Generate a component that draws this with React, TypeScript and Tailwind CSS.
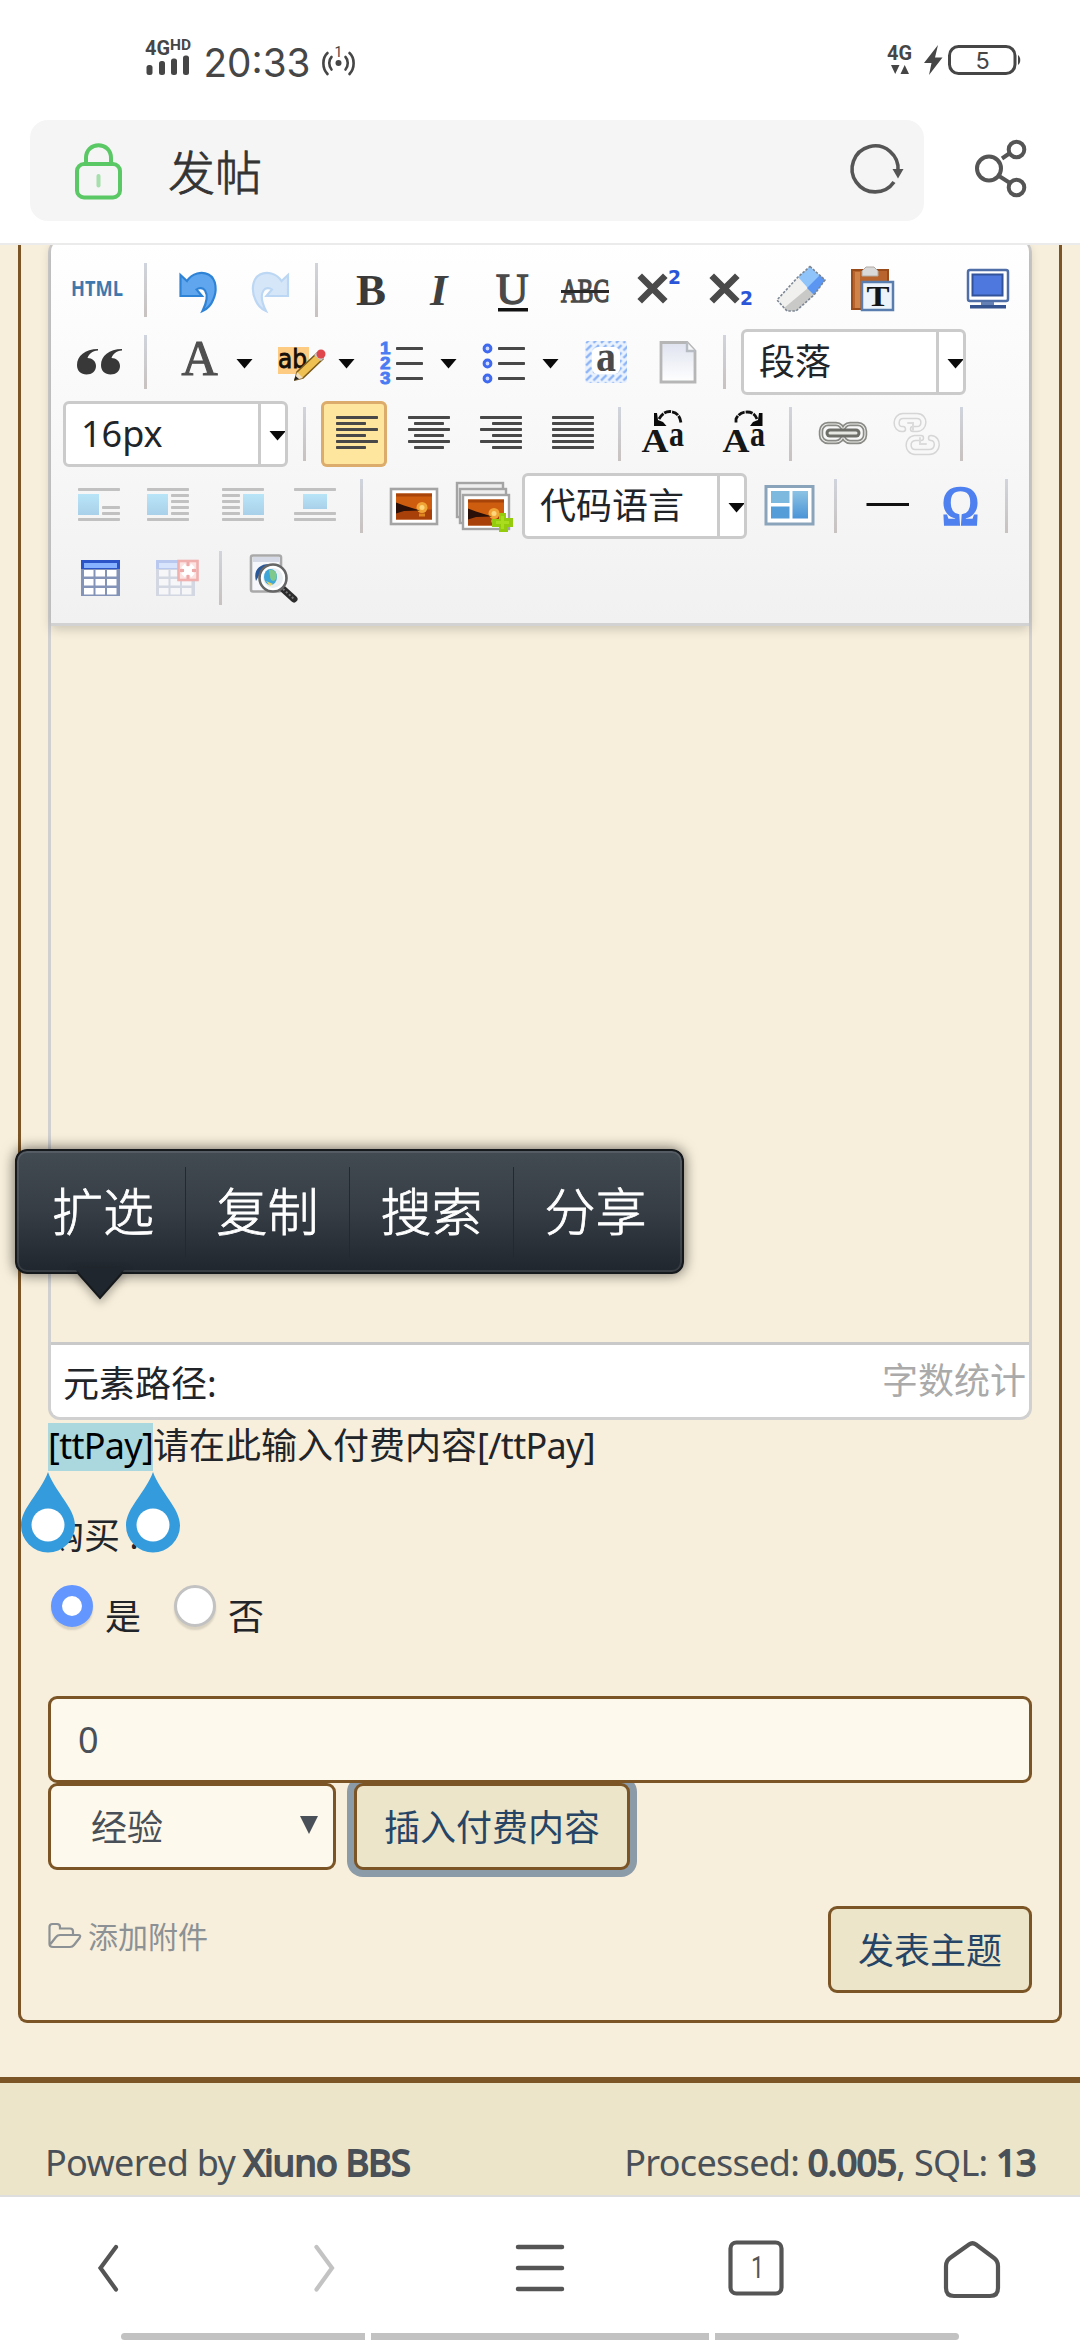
import React, { useState } from "react";

const NAV_COLOR = "#555555";

type IconProps = { children: React.ReactNode; className?: string };

// every toolbar icon is drawn on the same 66x66 board
const Glyph: React.FC<IconProps> = ({ children, className }) => (
  <svg
    width="66"
    height="66"
    viewBox="0 0 66 66"
    className={`shrink-0 overflow-visible ${className ?? ""}`}
  >
    {children}
  </svg>
);

const ToolButton: React.FC<{
  children: React.ReactNode;
  active?: boolean;
  arrow?: boolean;
  className?: string;
}> = ({ children, active, arrow, className }) => (
  <button
    type="button"
    className={`flex shrink-0 h-[66px] mr-[6px] rounded-[6px] ${
      arrow ? "w-[96px]" : "w-[66px]"
    } ${active ? "bg-[#ffe69f] shadow-[inset_0_0_0_3px_#dcac6c]" : ""} ${
      className ?? ""
    }`}
  >
    <Glyph>{children}</Glyph>
    {arrow && (
      <svg width="30" height="66" viewBox="66 0 30 66">
        <path d="M74.500 30 H90.500 L82.500 39.500 Z" fill="#0a0a0a" />
      </svg>
    )}
  </button>
);

const Separator = () => (
  <div className="shrink-0 w-[3px] h-[54px] ml-[9px] mr-[15px] bg-gradient-to-b from-[#d0d4dc] to-[#c8c2c0]" />
);

const Combo: React.FC<{ label: string }> = ({ label }) => (
  <div className="flex shrink-0 w-[225px] h-[66px] mr-[6px] border-[3px] border-[#cbcbcb] rounded-[6px] bg-white text-[36px] text-[#212529]">
    <div className="flex items-center flex-1 pl-[15px] whitespace-nowrap leading-none">
      {label}
    </div>
    <div className="w-[27px] border-l-[3px] border-[#cbcbcb]">
      <svg width="24" height="60" viewBox="0 0 24 60">
        <path d="M8.500 27 H24 V28 L16.500 36.500 Z" fill="#0a0a0a" />
      </svg>
    </div>
  </div>
);

const Row: React.FC<{ children: React.ReactNode }> = ({ children }) => (
  <div className="flex items-center h-[72px]">{children}</div>
);

const Lines: React.FC<{
  rows: [number, number, number][];
  color?: string;
}> = ({ rows, color = "#484848" }) => (
  <>
    {rows.map(([x, x2, y], i) => (
      <rect key={i} x={x} y={y - 1.5} width={x2 - x} height="3" rx="0.8" fill={color} />
    ))}
  </>
);

const UndoPath = ({ light }: { light?: boolean }) => (
  <path
    d="M18.500 18 L25 24 C30 16 40 14 46.500 17.500 C55 22 55 35 51 43 C49 48 45 52 40.500 54 C44.500 46 46 38 43 33.500 C41 30.500 37 30.500 34.500 32.500 L40 39 H18.500 Z"
    fill={light ? "#d5e6f9" : "#5fa6ee"}
    stroke={light ? "#bcd7f3" : "#2f83d6"}
    strokeWidth="2.200"
  />
);

const CrossX = () => (
  <path d="M21 21 L42 42 M42 21 L21 42" stroke="#4a4a4a" strokeWidth="6.500" strokeLinecap="square" />
);

const Two = ({ y }: { y: number }) => (
  <text x="47" y={y} fontFamily="DejaVu Sans" fontWeight="700" fontSize="20" fill="#2b55d8" textLength="13" lengthAdjust="spacingAndGlyphs">
    2
  </text>
);

const Sunset = ({ x, y }: { x: number; y: number }) => (
  <g transform={`translate(${x} ${y})`}>
    <rect width="36" height="26" fill="#cf5d10" />
    <rect width="36" height="3" fill="#a8440a" />
    <path d="M0 16 H36 V26 H0 Z" fill="#a8400a" />
    <circle cx="26" cy="14" r="5.500" fill="#f0a436" />
    <circle cx="26" cy="14" r="2.500" fill="#ffd67a" />
    <path d="M0 9 L8 12 L24 17 L8 17.500 L0 20 Z" fill="#2a1008" />
    <path d="M23 20 H29 V23 H23 Z" fill="#e0861e" />
  </g>
);

const TurnCase = ({ flip }: { flip?: boolean }) => (
  <g transform={flip ? "translate(9 0)" : undefined}>
    {flip ? (
      <>
        <path d="M45.500 12 V25 H33 L36 21 L41 19 L42 12 Z" fill="#0a0a0a" />
        <path d="M19 21.500 V18 C21 14 24 11 30 11 C35 11 38 13 40 18" fill="none" stroke="#111" strokeWidth="2.800" strokeDasharray="7 1" />
      </>
    ) : (
      <>
        <path d="M18 12 V25 H30.500 L27 21 L22 19 L21 12 Z" fill="#0a0a0a" />
        <path d="M23 18 C26 13 29 10.500 34 10.500 C40 11 44 14 45 22" fill="none" stroke="#111" strokeWidth="2.800" strokeDasharray="7 1" />
      </>
    )}
    <text x="5.500" y="51" fontFamily="Liberation Serif" fontWeight="700" fontSize="34" fill="#161616" textLength="27" lengthAdjust="spacingAndGlyphs">
      A
    </text>
    <text x="33" y="45" fontFamily="Liberation Serif" fontWeight="700" fontSize="35" fill="#161616" textLength="15" lengthAdjust="spacingAndGlyphs">
      a
    </text>
  </g>
);

const Toolbar = () => (
  <div className="h-[386px] pt-[14px] pl-[12px] rounded-t-[12px] border-b-[3px] border-[#d2d2d2] bg-gradient-to-b from-white to-[#f1f1f1] shadow-[0_3px_12px_rgba(0,0,0,0.18)]">
    <Row>
      <ToolButton>
        <text x="8" y="39" fontFamily="Open Sans" fontWeight="700" fontSize="21" fill="#3f78ad" textLength="52" lengthAdjust="spacingAndGlyphs">
          HTML
        </text>
      </ToolButton>
      <Separator />
      <ToolButton>
        <UndoPath />
      </ToolButton>
      <ToolButton>
        <g transform="translate(72.500 0) scale(-1 1)">
          <UndoPath light />
        </g>
      </ToolButton>
      <Separator />
      <ToolButton>
        <text x="23" y="48" fontFamily="Liberation Serif" fontWeight="700" fontSize="45" fill="#3a3a3a">
          B
        </text>
      </ToolButton>
      <ToolButton>
        <text x="25" y="48" fontFamily="Liberation Serif" fontWeight="700" fontStyle="italic" fontSize="45" fill="#404040">
          I
        </text>
      </ToolButton>
      <ToolButton>
        <text x="19" y="47" fontFamily="Liberation Serif" fontSize="45" fill="#4a4a4a" stroke="#4a4a4a" strokeWidth="1.500">
          U
        </text>
        <rect x="21" y="51" width="30" height="3.500" fill="#111" />
      </ToolButton>
      <ToolButton>
        <text x="12" y="45" fontFamily="Liberation Serif" fontSize="34" fill="#4a4a4a" stroke="#4a4a4a" strokeWidth="1.400" textLength="48" lengthAdjust="spacingAndGlyphs">
          ABC
        </text>
        <rect x="12" y="33" width="48" height="3" fill="#2a2a2a" />
      </ToolButton>
      <ToolButton>
        <CrossX />
        <Two y={27} />
      </ToolButton>
      <ToolButton>
        <CrossX />
        <Two y={48} />
      </ToolButton>
      <ToolButton>
        <path d="M33 20 L49 38 L31 54 H22 L12 43 Z" fill="#f0f0ee" />
        <path d="M19 51 L43 31 L49 38 L31 54 H22 Z" fill="#c9c9c7" />
        <path d="M45 9.500 L60 23 L49 38 L33 20 Z" fill="#8fc4fb" />
        <path d="M60 23 L49 38 L42 31 L55 18 Z" fill="#5a96f2" />
        <path d="M45 9.500 L60 23 L49 38 L31 54 H22 L12 43 L33 20 Z" fill="none" stroke="#7d8794" strokeWidth="1.600" strokeDasharray="2.500 1.500" />
      </ToolButton>
      <ToolButton>
        <rect x="15" y="13" width="36" height="39" fill="#b8642c" stroke="#9a4b1a" strokeWidth="2" />
        <rect x="18" y="15" width="5" height="36" fill="#cf8348" />
        <path d="M25 14 L29 10 H37 L41 14 V19 H25 Z" fill="#d9d9d9" stroke="#b0aaa5" />
        <rect x="25" y="25" width="31" height="28" fill="#edf3fb" stroke="#5a7db0" strokeWidth="2.500" />
        <text x="29.500" y="49" fontFamily="Liberation Serif" fontWeight="700" fontSize="29" fill="#151515" textLength="23" lengthAdjust="spacingAndGlyphs">
          T
        </text>
      </ToolButton>
      <ToolButton className="ml-[42px]">
        <rect x="17" y="13" width="40" height="31" rx="2" fill="#fff" stroke="#4f6ea8" strokeWidth="2.500" />
        <rect x="21.500" y="17.500" width="30" height="21" fill="#4f78df" stroke="#32539a" strokeWidth="2" />
        <rect x="30" y="45" width="13" height="4" fill="#6480b4" />
        <rect x="19" y="48" width="36" height="3.500" fill="#34538f" />
      </ToolButton>
    </Row>

    <Row>
      <ToolButton>
        {[0, 24].map((dx) => (
          <path
            key={dx}
            transform={`translate(${dx} 0)`}
            d="M35 20 C22 20 14 27 14 36 C14 42 18 45.500 23.500 45.500 C29 45.500 33 42 33 37 C33 32 29 29 24.500 29 C26 25 29 22 35 21.500 Z"
            fill="#383838"
          />
        ))}
      </ToolButton>
      <Separator />
      <ToolButton arrow>
        <text x="19.500" y="46" fontFamily="Liberation Serif" fontSize="50" fill="#505050" stroke="#505050" strokeWidth="1.200">
          A
        </text>
      </ToolButton>
      <ToolButton arrow>
        <rect x="14" y="18" width="31" height="27" fill="#fecb83" />
        <text x="14" y="39" fontFamily="DejaVu Sans" fontSize="27" fill="#15100a" stroke="#15100a" strokeWidth="0.900" textLength="29" lengthAdjust="spacingAndGlyphs">
          ab
        </text>
        <path d="M53 24 L59 30 L39 49 L31 51 L33 43 Z" fill="#efc052" stroke="#7a5a1c" strokeWidth="1.500" />
        <path d="M33 43 L39 49 L31 51 Z" fill="#f0dfc0" />
        <path d="M31.500 47 L35 50 L30 51.500 Z" fill="#222" />
        <path d="M50 26 L53 23 L60 29 L57 32 Z" fill="#c8c8c8" />
        <circle cx="57" cy="25" r="4.500" fill="#e0474c" />
      </ToolButton>
      <ToolButton arrow>
        {[1, 2, 3].map((n, i) => (
          <text key={n} x="14" y={25 + i * 15} fontFamily="Liberation Sans" fontWeight="700" fontSize="17" fill="#4a7bf2" stroke="#4a7bf2" strokeWidth="0.800" textLength="10.500" lengthAdjust="spacingAndGlyphs">
            {n}
          </text>
        ))}
        <Lines rows={[[30, 57, 19.5], [30, 57, 34.5], [30, 57, 49.5]]} />
      </ToolButton>
      <ToolButton arrow>
        {[19.5, 34.5, 49.5].map((y) => (
          <circle key={y} cx="19.500" cy={y} r="3.400" fill="#cfdcff" stroke="#3f69ef" strokeWidth="3" />
        ))}
        <Lines rows={[[30, 57, 19.5], [30, 57, 34.5], [30, 57, 49.5]]} />
      </ToolButton>
      <ToolButton>
        <defs>
          <pattern id="hatch" width="7.500" height="7.500" patternUnits="userSpaceOnUse">
            <rect width="7.500" height="7.500" fill="#eaf2fe" />
            <path d="M1 6.500 L6.500 1" stroke="#8db4f5" strokeWidth="2.400" />
          </pattern>
        </defs>
        <rect x="15" y="12" width="42" height="42" rx="3" fill="url(#hatch)" />
        <rect x="22" y="18" width="28" height="27" rx="6" fill="#fff" />
        <text x="26" y="42" fontFamily="Liberation Serif" fontWeight="700" fontSize="44" fill="#4a4a4a" textLength="20" lengthAdjust="spacingAndGlyphs">
          a
        </text>
      </ToolButton>
      <ToolButton>
        <linearGradient id="sheet" x1="0" y1="0" x2="0" y2="1">
          <stop offset="0" stopColor="#dfe3ef" />
          <stop offset="1" stopColor="#ffffff" />
        </linearGradient>
        <path d="M19 13.500 H45 L53 22 V53 H19 Z" fill="url(#sheet)" stroke="#b6b6b6" strokeWidth="2.800" />
        <path d="M45 13.500 V22 H53" fill="#f4f6f8" stroke="#b6bcc2" strokeWidth="2.400" />
      </ToolButton>
      <Separator />
      <Combo label="段落" />
    </Row>

    <Row>
      <Combo label="16px" />
      <Separator />
      <ToolButton active>
        <Lines rows={[[15, 57, 16.5], [15, 45, 22.5], [15, 57, 28.5], [15, 45, 34.5], [15, 57, 40.5], [15, 45, 46.5]]} />
      </ToolButton>
      <ToolButton>
        <Lines rows={[[15, 57, 16.5], [21, 51, 22.5], [15, 57, 28.5], [21, 51, 34.5], [15, 57, 40.5], [21, 51, 46.5]]} />
      </ToolButton>
      <ToolButton>
        <Lines rows={[[15, 57, 16.5], [27, 57, 22.5], [15, 57, 28.5], [27, 57, 34.5], [15, 57, 40.5], [27, 57, 46.5]]} />
      </ToolButton>
      <ToolButton>
        <Lines rows={[[15, 57, 16.5], [15, 57, 22.5], [15, 57, 28.5], [15, 57, 34.5], [15, 57, 40.5], [15, 57, 46.5]]} />
      </ToolButton>
      <Separator />
      <ToolButton>
        <TurnCase />
      </ToolButton>
      <ToolButton>
        <TurnCase flip />
      </ToolButton>
      <Separator />
      <ToolButton>
        <rect x="14" y="23" width="22" height="18" rx="7" fill="none" stroke="#8a8a86" strokeWidth="4.500" />
        <rect x="36" y="23" width="22" height="18" rx="7" fill="none" stroke="#8a8a86" strokeWidth="4.500" />
        <rect x="14" y="23" width="22" height="18" rx="7" fill="none" stroke="#ececea" strokeWidth="1.200" />
        <rect x="36" y="23" width="22" height="18" rx="7" fill="none" stroke="#ececea" strokeWidth="1.200" />
        <path d="M23 32 H49" stroke="#6f6f6a" strokeWidth="9" strokeLinecap="round" />
        <path d="M23 32 H49" stroke="#e6e6e2" strokeWidth="3" strokeLinecap="round" />
      </ToolButton>
      <ToolButton>
        <g fill="none" strokeLinecap="round">
          <path d="M24 28 C15 29 16 15 24 15 H38 C47 15 46 28 38 28 H34" stroke="#d6d6d6" strokeWidth="6.500" />
          <path d="M42 37 H36 C27 38 28 51 36 51 H50 C60 51 60 37 52 37" stroke="#d6d6d6" strokeWidth="6.500" />
          <path d="M24 28 C15 29 16 15 24 15 H38 C47 15 46 28 38 28 H34" stroke="#f8f8f8" strokeWidth="3.500" />
          <path d="M42 37 H36 C27 38 28 51 36 51 H50 C60 51 60 37 52 37" stroke="#f8f8f8" strokeWidth="3.500" />
          <path d="M29 22 H34 V29 M41 37 V43 H47" stroke="#dcdcdc" strokeWidth="2" />
        </g>
      </ToolButton>
      <Separator />
    </Row>

    <Row>
      <ToolButton>
        <linearGradient id="sky" x1="0" y1="0" x2="0" y2="1">
          <stop offset="0" stopColor="#b9e5f8" />
          <stop offset="1" stopColor="#a9d0e9" />
        </linearGradient>
        <rect x="15" y="21" width="21" height="21" fill="url(#sky)" />
        <Lines color="#c1c1c1" rows={[[15, 57, 16.5], [39, 57, 34.5], [39, 57, 40.5], [15, 57, 46.5]]} />
      </ToolButton>
      <ToolButton>
        <rect x="12" y="21" width="21" height="21" fill="url(#sky)" />
        <Lines color="#c1c1c1" rows={[[12, 54, 16.5], [36, 54, 22.5], [36, 54, 28.5], [36, 54, 34.5], [36, 54, 40.5], [12, 54, 46.5]]} />
      </ToolButton>
      <ToolButton>
        <rect x="36" y="21" width="21" height="21" fill="url(#sky)" />
        <Lines color="#c1c1c1" rows={[[15, 57, 16.5], [15, 33, 22.5], [15, 33, 28.5], [15, 33, 34.5], [15, 33, 40.5], [15, 57, 46.5]]} />
      </ToolButton>
      <ToolButton>
        <rect x="24" y="21" width="24" height="15" fill="url(#sky)" />
        <Lines color="#c1c1c1" rows={[[15, 57, 16.5], [15, 57, 40.5], [15, 57, 46.5]]} />
      </ToolButton>
      <Separator />
      <ToolButton>
        <rect x="13" y="16" width="46" height="35" fill="#fff" stroke="#a4a4a4" strokeWidth="2.600" />
        <Sunset x={18} y={20.5} />
      </ToolButton>
      <ToolButton>
        <rect x="7" y="10" width="46" height="34" fill="#eee" stroke="#a4a4a4" strokeWidth="2.400" />
        <rect x="10" y="16" width="46" height="34" fill="#eee" stroke="#a4a4a4" strokeWidth="2.400" />
        <rect x="13" y="22" width="46" height="34" fill="#fff" stroke="#a4a4a4" strokeWidth="2.400" />
        <Sunset x={18} y={26.5} />
        <path d="M49 40 H56 V45 H63 V54 H58 V59 H49 V54 H42 V46 H49 Z" fill="#94cb0c" />
        <path d="M51 43 H54 V48 H59 V51 H54 V56 H51 V51 H46 V48 H51 Z" fill="#a9dc1c" />
      </ToolButton>
      <Combo label="代码语言" />
      <ToolButton>
        <linearGradient id="tile" x1="0" y1="0" x2="0" y2="1">
          <stop offset="0" stopColor="#8cc3e4" />
          <stop offset="1" stopColor="#4a94d6" />
        </linearGradient>
        <rect x="13" y="13.500" width="47" height="37.500" fill="#fff" stroke="#8aa4bb" strokeWidth="3" />
        <rect x="18" y="18" width="18.500" height="12" fill="#7db9de" />
        <rect x="18" y="33.500" width="18.500" height="12" fill="#559dd8" />
        <rect x="39.500" y="18" width="15.500" height="27.500" fill="url(#tile)" />
      </ToolButton>
      <Separator />
      <ToolButton>
        <rect x="14.500" y="30" width="42.500" height="3" fill="#111" />
      </ToolButton>
      <ToolButton>
        <text x="18" y="51" fontFamily="Liberation Serif" fontSize="54" fill="#4f80f0" stroke="#4f80f0" strokeWidth="2.400" textLength="37" lengthAdjust="spacingAndGlyphs">
          Ω
        </text>
      </ToolButton>
      <Separator />
    </Row>

    <Row>
      <ToolButton>
        <rect x="18" y="15" width="39" height="36" fill="#8494b8" />
        <rect x="18" y="15" width="39" height="9" fill="#2b54c8" />
        <rect x="21" y="18" width="33" height="5" fill="#86b2ff" />
        {[25, 34, 43].map((y) =>
          [21, 32.5, 44].map((x) => (
            <rect key={`${x}-${y}`} x={x} y={y} width="9.500" height="6.500" fill="#fff" />
          ))
        )}
      </ToolButton>
      <ToolButton className="mr-[9px]">
        <g transform="translate(3 0)">
          <rect x="18" y="15" width="39" height="36" fill="#d2d7e2" />
          <rect x="18" y="15" width="39" height="9" fill="#b9c8ef" />
          <rect x="21" y="18" width="33" height="5" fill="#d8e4fb" />
          {[25, 34, 43].map((y) =>
            [21, 32.5, 44].map((x) => (
              <rect key={`${x}-${y}`} x={x} y={y} width="9.500" height="6.500" fill="#f6f6f8" />
            ))
          )}
        </g>
        <rect x="43.500" y="16" width="19" height="19" fill="#fbe3e2" stroke="#f0b0ae" strokeWidth="2.600" />
        <path d="M48 20.500 L58 30.500 M58 20.500 L48 30.500" stroke="#fff" strokeWidth="5" />
        <path d="M53 17 V21 M53 30 V34 M45 25.500 H49 M57 25.500 H61" stroke="#eeaaa8" strokeWidth="3" />
      </ToolButton>
      <Separator />
      <ToolButton>
        <rect x="14" y="10.500" width="30" height="36" rx="2" fill="#f6f7fa" stroke="#a9a9a9" strokeWidth="2.600" />
        <rect x="16" y="12" width="26" height="5" fill="#d5dae6" />
        <path d="M19 36 C16 26 22 19 32 19 L24 27 Z" fill="#28579a" />
        <path d="M46 44 L57 54" stroke="#2c2c2c" strokeWidth="7" strokeLinecap="round" />
        <path d="M46 44 L57 54" stroke="#777" strokeWidth="2" strokeDasharray="2 2" />
        <circle cx="36" cy="33" r="13.500" fill="#e8eef2" stroke="#666" strokeWidth="2.600" />
        <circle cx="36" cy="33" r="11" fill="none" stroke="#fff" strokeWidth="2" />
        <ellipse cx="33.500" cy="32" rx="6.500" ry="8" fill="#3fa6d8" />
        <path d="M32 25 C38 24 41 29 39 34 C36 38 33 35 33 31 Z" fill="#7fc98c" />
        <path d="M29 36 L36 39 L33 41 Z" fill="#e8d463" />
      </ToolButton>
    </Row>
  </div>
);

const StatusBar = () => (
  <div className="flex items-start justify-between h-[120px] shrink-0 text-[#464646] font-[Roboto]">
    <div className="flex pl-[145px] pt-[36px]">
      <svg width="48" height="44" viewBox="145 36 48 44">
        <g fontFamily="Roboto" fontWeight="700" fill="#464646">
          <text x="145" y="54.500" fontSize="20.500" textLength="25" lengthAdjust="spacingAndGlyphs">4G</text>
          <text x="170" y="50" fontSize="14" textLength="21" lengthAdjust="spacingAndGlyphs">HD</text>
        </g>
        <rect x="146.500" y="65" width="6" height="10" rx="2.500" fill="#464646" />
        <rect x="159" y="61" width="6" height="14" rx="2.500" fill="#464646" />
        <rect x="171" y="58.500" width="6" height="16.500" rx="2.500" fill="#464646" />
        <rect x="183" y="55.500" width="6" height="19.500" rx="2.500" fill="#464646" />
      </svg>
      <svg width="116" height="52" viewBox="199 36 116 52" className="ml-[6px] overflow-visible">
        <text x="203.500" y="76.500" fontFamily="Inter" fontSize="40" fill="#464646" textLength="107" lengthAdjust="spacingAndGlyphs">20:33</text>
      </svg>
      <svg width="36" height="44" viewBox="321 36 36 44" className="ml-[6px]">
        <circle cx="338.500" cy="63" r="3" fill="#464646" />
        <text x="334.500" y="57" fontFamily="Roboto" fontSize="14" fill="#464646">1</text>
        <g fill="none" stroke="#464646" strokeWidth="2.600" strokeLinecap="round">
          <path d="M327.500 53 C322 58 322 68 327.500 74 M331.500 57 C328.500 60 328.500 66 331.500 69.500" />
          <path d="M349.500 53 C355 58 355 68 349.500 74 M345.500 57 C348.500 60 348.500 66 345.500 69.500" />
        </g>
      </svg>
    </div>
    <svg width="140" height="44" viewBox="885 36 140 44" className="mt-[36px] mr-[55px]">
      <text x="887" y="60" fontFamily="Roboto" fontWeight="700" fontSize="21" fill="#464646" textLength="25" lengthAdjust="spacingAndGlyphs">4G</text>
      <path d="M891 65 H899.500 L895.200 74 Z M900.500 74 H909 L904.700 65 Z" fill="#464646" />
      <path d="M938 45 L924 63 H931.500 L929 75 L942.500 57.500 H935 Z" fill="#464646" />
      <rect x="949.500" y="46.500" width="65.500" height="27" rx="9" fill="none" stroke="#464646" strokeWidth="3" />
      <path d="M1018 55 C1021 57 1021 63 1018 65 Z" fill="#464646" />
      <text x="975.500" y="69" fontFamily="Inter" fontSize="23.500" fill="#464646">5</text>
    </svg>
  </div>
);

const AddressBar = () => (
  <div className="flex items-start h-[125px] shrink-0 pl-[30px] border-b-[2px] border-[#ebebeb]">
    <div className="flex items-center w-[894px] h-[101px] rounded-[18px] bg-[#f5f5f5]">
      <svg width="54" height="60" viewBox="71 138 54 60" className="ml-[41px]">
        <g fill="none" stroke="#5ac864" strokeWidth="4">
          <rect x="77" y="161" width="43" height="33.500" rx="7" />
          <path d="M86 160 V155 C86 138 111 138 111 155 V160" />
        </g>
        <path d="M98.500 173 V182.500" stroke="#a5dfab" strokeWidth="4" strokeLinecap="round" />
      </svg>
      <div className="ml-[43px] text-[47px] leading-none font-light text-[#333] pt-[3px] [-webkit-text-stroke:0.8px_#333]">发帖</div>
      <svg width="60" height="60" viewBox="846 140 60 60" className="ml-auto mr-[18px]">
        <path d="M894 181 A23 23 0 1 1 898 170" fill="none" stroke="#555" strokeWidth="3.600" />
        <path d="M892.500 168 H903.500 L898 177.500 Z" fill="#555" />
      </svg>
    </div>
    <svg width="64" height="70" viewBox="968 134 64 70" className="ml-[44px] mt-[14px]">
      <g fill="none" stroke="#555" strokeWidth="4">
        <circle cx="989" cy="168.500" r="12" />
        <circle cx="1016.500" cy="149.500" r="7.800" />
        <circle cx="1016.500" cy="187.500" r="7.800" />
        <path d="M1002 158.500 L1010 153 M999 176 L1010 183" />
      </g>
    </svg>
  </div>
);

const SelectionMenu = () => (
  <div className="absolute left-[15px] top-[1149px] w-[669px] h-[125px]">
    <div className="flex items-center h-[125px] px-[4px] rounded-[12px] border-[2px] border-[#15191c] bg-gradient-to-b from-[#424a52] via-[#363d45] to-[#20262d] shadow-[inset_0_0_0_2px_rgba(255,255,255,0.1),0_0_14px_rgba(0,0,0,0.6)]">
      {["扩选", "复制", "搜索", "分享"].map((item, i) => (
        <div
          key={item}
          className={`flex shrink-0 items-center justify-center w-[164px] h-[90px] text-[51px] leading-none font-light text-white [-webkit-text-stroke:0.8px_#fff] ${
            i > 0 ? "border-l border-[#23292f]" : ""
          }`}
        >
          {item}
        </div>
      ))}
    </div>
    <svg width="56" height="34" viewBox="0 0 56 34" className="absolute left-[57px] top-[119px] drop-shadow-[0_4px_5px_rgba(0,0,0,0.3)]">
      <path d="M2 0 L28 30 L54 0 Z" fill="#20262d" />
      <path d="M5 4 L28 30 L51 4" fill="none" stroke="#15191c" strokeWidth="2" />
    </svg>
  </div>
);

const Handle: React.FC<{ className: string }> = ({ className }) => (
  <svg width="54" height="82" viewBox="0 0 54 82" className={`absolute ${className}`}>
    <path d="M27 0 C34 20 54 36 54 53.500 A27 27 0 0 1 0 53.500 C0 36 20 20 27 0 Z" fill="#349bdc" />
    <circle cx="27" cy="53" r="16.500" fill="#fff" />
  </svg>
);

const Radio: React.FC<{
  checked: boolean;
  label: string;
  onSelect: () => void;
}> = ({ checked, label, onSelect }) => (
  <label className="flex items-start w-[123px]" onClick={onSelect}>
    <span
      className={`block w-[42px] h-[42px] rounded-full bg-white shadow-[0_3px_2px_rgba(0,0,0,0.12)] ${
        checked ? "border-[11px] border-[#6496ff]" : "border-[3px] border-[#c2c2c2]"
      }`}
    />
    <span className="ml-[12px] mt-[14px] leading-none">{label}</span>
  </label>
);

// the page font has no bold face, so strong text is the regular one thickened
const Strong: React.FC<{ children: React.ReactNode }> = ({ children }) => (
  <span className="[-webkit-text-stroke:1.8px_#495057]">{children}</span>
);

const BottomNav = () => (
  <div className="relative flex h-[145px] shrink-0 border-t-[2px] border-[#dedede] bg-white">
    <svg width="216" height="138" viewBox="0 2197 216 138">
      <path d="M116 2247 L100.500 2268 L116 2289.500" fill="none" stroke={NAV_COLOR} strokeWidth="4.200" strokeLinecap="round" />
    </svg>
    <svg width="216" height="138" viewBox="216 2197 216 138">
      <path d="M316.500 2247 L332 2268 L316.500 2289.500" fill="none" stroke="#c3c3c3" strokeWidth="4.200" strokeLinecap="round" />
    </svg>
    <svg width="216" height="138" viewBox="432 2197 216 138">
      <path d="M518 2247 H562 M518 2268 H562 M518 2289 H562" stroke={NAV_COLOR} strokeWidth="4.500" strokeLinecap="round" />
    </svg>
    <svg width="216" height="138" viewBox="648 2197 216 138">
      <rect x="730.500" y="2242.500" width="51" height="51" rx="6" fill="none" stroke={NAV_COLOR} strokeWidth="4.200" />
      <text x="751" y="2278" fontFamily="Roboto" fontSize="31" fill={NAV_COLOR} textLength="13" lengthAdjust="spacingAndGlyphs">1</text>
    </svg>
    <svg width="216" height="138" viewBox="864 2197 216 138">
      <path d="M969 2244.500 Q972.500 2242 976 2244.500 L994 2258 Q998 2261 998 2266 V2288 Q998 2296 990 2296 H954 Q946 2296 946 2288 V2266 Q946 2261 950 2258 Z" fill="none" stroke={NAV_COLOR} strokeWidth="4.200" />
    </svg>
    <div className="absolute left-[121px] bottom-0 flex gap-[6px] h-[7px]">
      <div className="w-[244px] rounded-l-full bg-[#c2c2c2]" />
      <div className="w-[338px] bg-[#c2c2c2]" />
      <div className="w-[244px] rounded-r-full bg-[#c2c2c2]" />
    </div>
  </div>
);

const App: React.FC = () => {
  const [paid, setPaid] = useState(true);

  return (
    <div className="relative flex flex-col w-[1080px] h-[2340px] overflow-hidden bg-white text-[36px] text-[#212529] font-['Noto_Sans','Noto_Sans_CJK_SC',sans-serif]">
      <StatusBar />
      <AddressBar />

      <div className="h-[1832px] shrink-0 overflow-hidden bg-[#f7eedb]">
        <div className="h-[1783px] mx-[18px] px-[27px] border-[3px] border-t-0 border-[#7b5526] rounded-b-[9px]">
          {/* editor */}
          <div className="h-[1180px] -mt-[5px] border-[3px] border-t-0 border-[#d0d0d0] rounded-[12px]">
            <Toolbar />
            <div className="h-[716px]" />
            <div className="flex justify-between h-[75px] pl-[12px] pr-[3px] border-t-[3px] border-[#c9c9c9] rounded-b-[9px] bg-white leading-none">
              <span className="pt-[21px]">元素路径:</span>
              <span className="pt-[18px] text-[#aaa]">字数统计</span>
            </div>
          </div>

          <div className="flex h-[48px] mt-[3px] leading-[46px] whitespace-nowrap">
            <span className="w-[105px] bg-[#abd8de] text-black tracking-[-0.7px]">[ttPay]</span>
            <span className="tracking-normal">请在此输入付费内容</span>
            <span className="tracking-[-0.7px]">[/ttPay]</span>
          </div>

          <div className="mt-[41px] h-[48px] leading-[48px]">购买 :</div>

          <div className="flex mt-[25px] h-[60px] ml-[3px]">
            <Radio checked={paid} label="是" onSelect={() => setPaid(true)} />
            <Radio checked={!paid} label="否" onSelect={() => setPaid(false)} />
          </div>

          <div className="relative z-10 flex items-center h-[87px] mt-[51px] pl-[27px] border-[3px] border-[#7b5526] rounded-[9px] bg-[#fef9ed] text-[#495057]">
            0
          </div>
          <div className="flex h-[87px] leading-none">
            <div className="flex items-center w-[288px] pl-[40px] border-[3px] border-[#7b5526] rounded-[9px] bg-[#fef9ed] text-[#495057]">
              <span className="pt-[2px]">经验</span>
              <svg width="20" height="20" viewBox="0 0 20 20" className="ml-auto mr-[14px] mb-[4px]">
                <path d="M1 1 H19 L10 19 Z" fill="#495057" />
              </svg>
            </div>
            <button type="button" className="w-[276px] ml-[18px] pt-[2px] border-[3px] border-[#7b5526] rounded-[9px] bg-[#ece5ca] text-[#264566] shadow-[0_0_0_7px_#8c9ba8]">
              插入付费内容
            </button>
          </div>

          <div className="flex justify-between mt-[36px] leading-none">
            <div className="flex items-start text-[30px] text-[#8b9194]">
              <svg width="35" height="28" viewBox="0 0 35 28" className="mt-[16px]">
                <path d="M1.500 22 V5 Q1.500 2 4.500 2 H9 Q12 2 12 5 V6.500 H22 Q25 6.500 25 9.500 V13 M1.500 22 Q1.500 25 5 25 H22 Q24.500 25 26 23 L31.500 16 Q33.500 13 30 13 H12 Q9.500 13 8 15 L2.500 22" fill="none" stroke="#8b9194" strokeWidth="2.200" />
              </svg>
              <span className="ml-[5px] mt-[16px]">添加附件</span>
            </div>
            <button type="button" className="w-[204px] h-[87px] pt-[2px] border-[3px] border-[#7b5526] rounded-[9px] bg-[#ece5ca] text-[#264566]">
              发表主题
            </button>
          </div>
        </div>
      </div>

      <div className="flex justify-between h-[118px] shrink-0 pt-[54px] pl-[45px] pr-[44px] border-t-[6px] border-[#7b5526] bg-[#ece5ca] text-[#495057] leading-[52px] tracking-[-0.7px] whitespace-nowrap">
        <span>
          Powered by <Strong>Xiuno BBS</Strong>
        </span>
        <span>
          Processed: <Strong>0.005</Strong>, SQL: <Strong>13</Strong>
        </span>
      </div>

      <BottomNav />

      <SelectionMenu />
      <Handle className="left-[21px] top-[1472px]" />
      <Handle className="left-[126px] top-[1472px]" />
    </div>
  );
};

export default App;
